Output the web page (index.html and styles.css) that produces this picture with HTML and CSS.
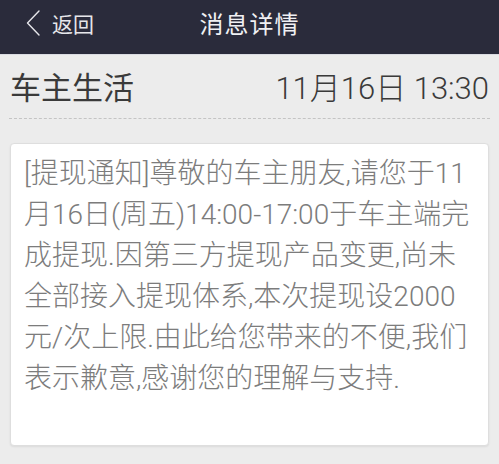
FILE: index.html
```html
<!DOCTYPE html>
<html lang="zh-CN">
<head>
    <meta charset="UTF-8">
    <meta name="viewport" content="width=device-width, initial-scale=1.0">
    <title>消息详情</title>
    <link rel="stylesheet" href="styles.css">
</head>
<body>
    <header class="top-bar">
        <a class="back-btn" href="#">
            <svg class="back-icon" viewBox="0 0 14 26" fill="none" stroke="currentColor" stroke-width="1.4" stroke-linecap="round" stroke-linejoin="round">
                <polyline points="13 1 1.5 13 13 25"></polyline>
            </svg>
            <span>返回</span>
        </a>
        <h1 class="title">消息详情</h1>
    </header>

    <div class="msg-head">
        <span class="sender">车主生活</span>
        <span class="time">11月16日 13:30</span>
    </div>

    <div class="msg-card">
        <p>[提现通知]尊敬的车主朋友,请您于11<br>月16日(周五)14:00-17:00于车主端完<br>成提现.因第三方提现产品变更,尚未<br>全部接入提现体系,本次提现设2000<br>元/次上限.由此给您带来的不便,我们<br>表示歉意,感谢您的理解与支持.</p>
    </div>
</body>
</html>
```

FILE: styles.css
```css
/* General Styles */
body {
    margin: 0;
    padding: 0;
    background: #ececec;
    font-family: 'Roboto', 'Noto Sans CJK SC', sans-serif;
    width: 499px;
    height: 464px;
    overflow: hidden;
}

/* Top bar */
.top-bar {
    position: relative;
    height: 54px;
    background: #2a2b3b;
    display: flex;
    align-items: center;
    justify-content: center;
    border-bottom: 1px solid #dadbe2;
}

.back-btn {
    position: absolute;
    left: 26px;
    top: 8px;
    display: flex;
    align-items: center;
    gap: 12px;
    color: #e6e6ea;
    text-decoration: none;
    font-size: 21px;
}

.back-icon {
    width: 14px;
    height: 26px;
}

.title {
    margin: 0 0 10px;
    font-size: 24px;
    font-weight: normal;
    color: #f0f0f3;
    letter-spacing: 1px;
}

/* Message header */
.msg-head {
    margin: 0 9px;
    padding: 8px 1px 10px;
    display: flex;
    justify-content: space-between;
    align-items: center;
    border-bottom: 1px dashed #c4c4c4;
    color: #3a3a3a;
}

.sender {
    font-size: 31px;
}

.time {
    font-size: 31px;
    font-weight: 300;
}

/* Message body */
.msg-card {
    margin: 24px 10px 0;
    height: 276px;
    padding: 9px 4px 16px 13px;
    background: #ffffff;
    border: 1px solid #dedede;
    border-radius: 4px;
    box-shadow: 0 1px 2px rgba(0, 0, 0, 0.08);
}

.msg-card p {
    margin: 0;
    font-size: 28px;
    line-height: 41px;
    font-weight: 300;
    color: #7c7c7c;
    white-space: nowrap;
}
```
